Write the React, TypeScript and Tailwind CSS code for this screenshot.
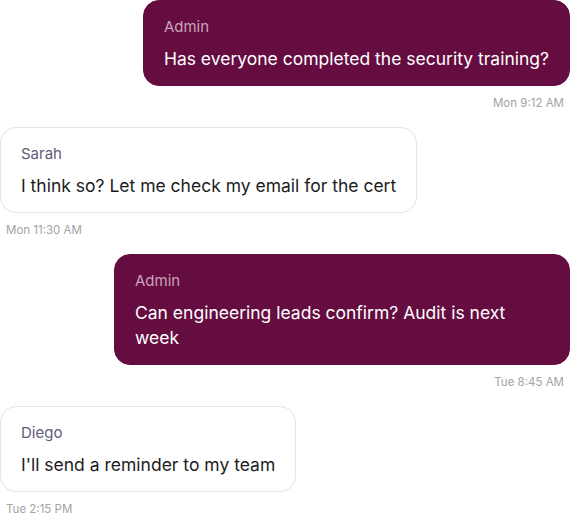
const messages = [
  { id: 1, author: 'Admin', text: 'Has everyone completed the security training?', time: 'Mon 9:12 AM', mine: true },
  { id: 2, author: 'Sarah', text: 'I think so? Let me check my email for the cert', time: 'Mon 11:30 AM', mine: false },
  { id: 3, author: 'Admin', text: 'Can engineering leads confirm? Audit is next week', time: 'Tue 8:45 AM', mine: true },
  { id: 4, author: 'Diego', text: "I'll send a reminder to my team", time: 'Tue 2:15 PM', mine: false },
];

function Bubble({ author, text, time, mine }) {
  return (
    <div className={mine ? 'flex flex-col items-end' : 'flex flex-col items-start'}>
      <div
        className={
          mine
            ? 'max-w-[80%] rounded-2xl border border-[#650c41] bg-[#650c41] px-5 py-[14px]'
            : 'max-w-[80%] rounded-2xl border border-[#e4e4e7] bg-white px-5 py-[14px]'
        }
      >
        <div className={mine ? 'text-[15px] leading-6 text-[#c9a3b8]' : 'text-[15px] leading-6 text-[#5f5b78]'}>
          {author}
        </div>
        <p className={mine ? 'mt-[7px] text-[17.5px] leading-[25px] text-white' : 'mt-[7px] text-[17.5px] leading-[25px] text-[#1c1c1e]'}>
          {text}
        </p>
      </div>
      <span className="mt-[9px] px-[6px] text-[11.5px] leading-4 text-[#a3a3a3]">{time}</span>
    </div>
  );
}

export default function App() {
  return (
    <div className="flex w-[570px] flex-col gap-4 bg-white font-['Inter',sans-serif]">
      {messages.map((m) => (
        <Bubble key={m.id} author={m.author} text={m.text} time={m.time} mine={m.mine} />
      ))}
    </div>
  );
}
